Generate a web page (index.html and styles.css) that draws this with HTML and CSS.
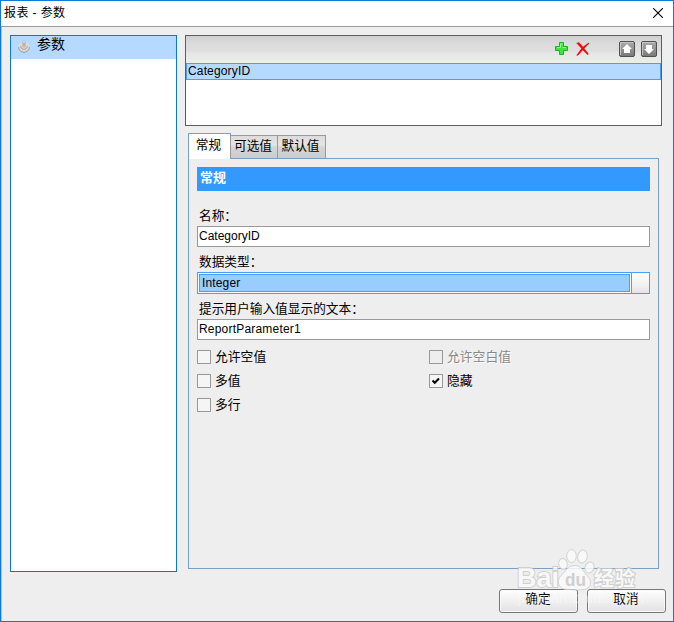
FILE: index.html
```html
<!DOCTYPE html>
<html lang="zh-CN">
<head>
<meta charset="utf-8">
<title>报表 - 参数</title>
<link rel="stylesheet" href="styles.css">
</head>
<body>
<div class="window">
  <header class="titlebar">
    <span class="title">报表 - 参数</span>
    <svg class="close" width="10" height="10" viewBox="0 0 10 10"><path d="M.2.2l9.6 9.6M9.8.2L.2 9.8" stroke="#000" stroke-width="1.1"/></svg>
  </header>
  <main class="main">
    <nav class="sidebar">
      <div class="nav-item">
        <svg class="nav-icon" width="12" height="13" viewBox="0 0 12 13"><path d="M2.500 2.500L.5 5v4l2 2.500L6 12.800l3.500-1.300 2-2.500V5l-2-2.500z" fill="#dedbd7"/><path d="M.8 7v2l2 2.300L6 12.500l3.200-1.200 2-2.300V7" fill="none" stroke="#9f9c99"/><path d="M2.500 6l1 2.500L6 9.500l2.500-1 1-2.500" fill="none" stroke="#aaa7a4"/><path d="M4.500 2L6 .5 7.500 2v5L6 8 4.500 7z" fill="#e9e5e1" stroke="#b6b2ae" stroke-width=".7"/><path d="M6 2.500v4" stroke="#858280"/></svg>
        <span>参数</span>
      </div>
    </nav>
    <div class="content">
      <section class="list">
        <div class="toolbar">
          <svg class="add" width="13" height="13" viewBox="0 0 13 13"><path d="M4.500.5h4v4h4v4h-4v4h-4v-4h-4v-4h4z" fill="#3ce43c" stroke="#18b618"/><path d="M5.500 2h2M2 5.500h3.500V2M7.500 5.500H11" fill="none" stroke="#94ff82"/></svg>
          <svg class="remove" width="14" height="14" viewBox="0 0 14 14"><path d="M.3 1L3 .3l4 4.500L12.500.8l.8.7-5 5.100 4.500 5.400-1.200.9L6.800 8.300 2 13.500H.2L5.400 6.600z" fill="#ed0c0c"/></svg>
          <svg class="up" width="16" height="16" viewBox="0 0 16 16"><defs><linearGradient id="g" x2="0" y2="1"><stop stop-color="#aaa"/><stop offset=".4" stop-color="#999"/><stop offset="1" stop-color="#777"/></linearGradient></defs><rect x=".5" y=".5" width="15" height="15" rx="1.500" fill="url(#g)" stroke="#505050"/><path d="M1.500 14V1.500H14" fill="none" stroke="#c7c7c7"/><path d="M8 3l5 5h-2v4H5V8H3z" fill="#fff"/></svg>
          <svg class="down" width="16" height="16" viewBox="0 0 16 16"><rect x=".5" y=".5" width="15" height="15" rx="1.500" fill="url(#g)" stroke="#505050"/><path d="M1.500 14V1.500H14" fill="none" stroke="#c7c7c7"/><path d="M8 13l5-5h-2V4H5v4H3z" fill="#fff"/></svg>
        </div>
        <div class="list-row"><span>CategoryID</span></div>
      </section>
      <div class="tabs">
        <div class="tab active">常规</div>
        <div class="tab second">可选值</div>
        <div class="tab third">默认值</div>
      </div>
      <section class="panel">
        <h2 class="heading">常规</h2>
        <div class="label first">名称：</div>
        <div class="field">CategoryID</div>
        <div class="label">数据类型：</div>
        <div class="select"><span class="value">Integer</span><span class="drop"></span></div>
        <div class="label">提示用户输入值显示的文本：</div>
        <div class="field prompt">ReportParameter1</div>
        <div class="checks">
          <div class="check"><i class="box"></i><span>允许空值</span></div>
          <div class="check disabled"><i class="box"></i><span>允许空白值</span></div>
          <div class="check"><i class="box"></i><span>多值</span></div>
          <div class="check"><i class="box"><svg width="12" height="12" viewBox="0 0 12 12"><path d="M2.500 5.500L4.800 7.800 9 3.500" fill="none" stroke="#000" stroke-width="2"/></svg></i><span>隐藏</span></div>
          <div class="check"><i class="box"></i><span>多行</span></div>
        </div>
      </section>
    </div>
  </main>
  <footer class="footer">
    <div class="button">确定</div>
    <div class="button">取消</div>
  </footer>
  <svg class="watermark" width="160" height="70" viewBox="0 0 160 70">
    <g fill="#fafafa" stroke="#cfcfcf" stroke-width="1">
      <ellipse cx="50" cy="20" rx="4.200" ry="5.500" transform="rotate(-15 50 20)"/>
      <ellipse cx="58.500" cy="12" rx="4.800" ry="6.500"/>
      <ellipse cx="69.500" cy="12.500" rx="4.800" ry="6.500" transform="rotate(12 69.500 12.500)"/>
      <ellipse cx="76.500" cy="23.500" rx="4.500" ry="5.500" transform="rotate(20 76.500 23.500)"/>
      <path d="M62 21.500c7 0 8 6 12 10 5 4 5 13-3 14-5 1-12 0-17 0-9 0-11-9-6-14 5-4 6-10 14-10z"/>
    </g>
    <g class="mark-text">
      <text x="4" y="43" font-size="28" textLength="42" lengthAdjust="spacingAndGlyphs">Bai</text>
      <text class="du" x="52" y="42" font-size="19" textLength="21" lengthAdjust="spacingAndGlyphs">du</text>
      <text x="81" y="42" font-size="20" textLength="41">经验</text>
    </g>
    <text class="domain" x="5" y="59" font-size="15" textLength="126">jingyan.baidu.com</text>
  </svg>
</div>
</body>
</html>
```
FILE: styles.css
```css
* { box-sizing: border-box; }
body {
  margin: 0;
  overflow: hidden;
  color: #000;
  font: 12px/16px "Liberation Sans", "Noto Sans CJK SC", sans-serif;
}
.window {
  position: relative;
  display: flex;
  flex-direction: column;
  width: 674px;
  height: 622px;
  border: 1px solid #0e7bd8;
  background: #eee;
}
.titlebar {
  display: flex;
  flex: none;
  justify-content: space-between;
  height: 26px;
  padding: 4px 10px 0 3px;
  border-bottom: 1px solid #999;
  background: #fff;
}
.title { letter-spacing: .4px; }
.close { margin-top: 3px; }
.main {
  display: flex;
  flex: none;
  gap: 8px;
  height: 545px;
  padding: 8px 11px 0 8px;
  border-left: 1px solid #bbb;
}
.sidebar {
  width: 167px;
  height: 537px;
  border: 1px solid #0878d2;
  background: #fff;
}
.nav-item {
  display: flex;
  gap: 7px;
  height: 23px;
  padding-left: 7px;
  background: #b5d9ff;
  font-size: 14px;
  line-height: 17px;
}
.nav-icon { margin-top: 4px; }
.content { width: 477px; }
.list {
  height: 91px;
  border: 1px solid #5d5d5d;
  background: #fff;
}
.toolbar {
  display: flex;
  justify-content: flex-end;
  height: 27px;
  padding: 5px 4px 0 0;
  background: linear-gradient(#cfcfcf, #dcdcdc 8px, #dedede 15px, #e6e6e6 17px, #ededed);
}
.add { margin: 1px 8px 0 0; }
.remove { margin: 1px 29px 0 0; }
.up { margin-right: 6px; }
.list-row {
  height: 17px;
  padding-left: 1px;
  border: 1px solid #4a9ef7;
  background: #b5d9ff;
  line-height: 15px;
  letter-spacing: .15px;
}
.tabs {
  position: relative;
  display: flex;
  align-items: flex-end;
  height: 33px;
  padding: 7px 0 0 3px;
}
.tab {
  height: 24px;
  border: 1px solid #999;
  border-bottom-color: #7a9fc5;
  background: linear-gradient(#dcdcdc, #e5e5e5 9px, #d5d5d5 11px, #ccc);
  font-size: 12.7px;
  line-height: 20px;
  text-align: center;
}
.active {
  width: 43px;
  height: 26px;
  padding-right: 2px;
  border-color: #7a9fc5;
  border-bottom: 0;
  background: #fff;
  line-height: 23px;
}
.second { width: 48px; margin-left: -1px; padding-right: 2px; }
.third { width: 49px; margin-left: -1px; padding-right: 2px; }
.panel {
  width: 471px;
  height: 411px;
  margin: -1px 0 0 3px;
  padding: 8px;
  border: 1px solid #7a9fc5;
}
.heading {
  height: 24px;
  margin: 0;
  padding-left: 3px;
  background: #3399ff;
  color: #fff;
  font-size: 13px;
  line-height: 22px;
}
.label {
  height: 25px;
  padding: 7px 0 0 2px;
  font-size: 12.7px;
}
.first { height: 35px; padding-top: 17px; }
.field {
  height: 21px;
  padding-left: 1px;
  border: 1px solid #999;
  background: #fff;
  line-height: 18px;
}
.prompt { letter-spacing: .2px; }
.select {
  display: flex;
  height: 22px;
  border: 1px solid #4a9ef7;
  background: #fff;
}
.value {
  width: 431px;
  margin: 1px;
  padding-left: 2px;
  border: 1px solid #4a9ef7;
  background: #99ccff;
  line-height: 17px;
  letter-spacing: .15px;
}
.drop {
  flex: 1;
  border-left: 1px solid #4a9ef7;
  background: linear-gradient(#fff, #f5f5f5 8px, #eee 14px, #e3e3e3);
}
.checks {
  display: grid;
  grid-template-columns: 232px auto;
  grid-auto-rows: 24px;
  padding-top: 5px;
}
.check {
  display: flex;
  align-items: center;
  gap: 4px;
  font-size: 12.8px;
}
.box {
  width: 14px;
  height: 14px;
  border: 1px solid #999;
  background: #f5f5f5;
}
.box svg { display: block; }
.disabled { color: #888; text-shadow: 1px 1px #fff; }
.disabled .box { background: #eee; }
.footer {
  display: flex;
  flex: 1;
  align-items: flex-start;
  justify-content: flex-end;
  gap: 9px;
  padding: 17px 7px 0 0;
  border-left: 1px solid #bbb;
}
.button {
  width: 79px;
  height: 24px;
  padding-right: 1px;
  border: 1px solid #777;
  border-radius: 3px;
  background: linear-gradient(#fff, #f7f7f7 5px, #eee 13px, #e1e1e1);
  box-shadow: inset 0 0 0 1px #fafafa;
  font-size: 12.7px;
  line-height: 19px;
  text-align: center;
}
.watermark {
  position: absolute;
  left: 512px;
  top: 543px;
  opacity: .85;
}
.mark-text {
  fill: #fafafa;
  stroke: #cacaca;
  stroke-width: 2px;
  paint-order: stroke;
  font-weight: bold;
}
.mark-text .du { fill: #cacaca; stroke: none; }
.domain { fill: #fff; opacity: .45; }
```
